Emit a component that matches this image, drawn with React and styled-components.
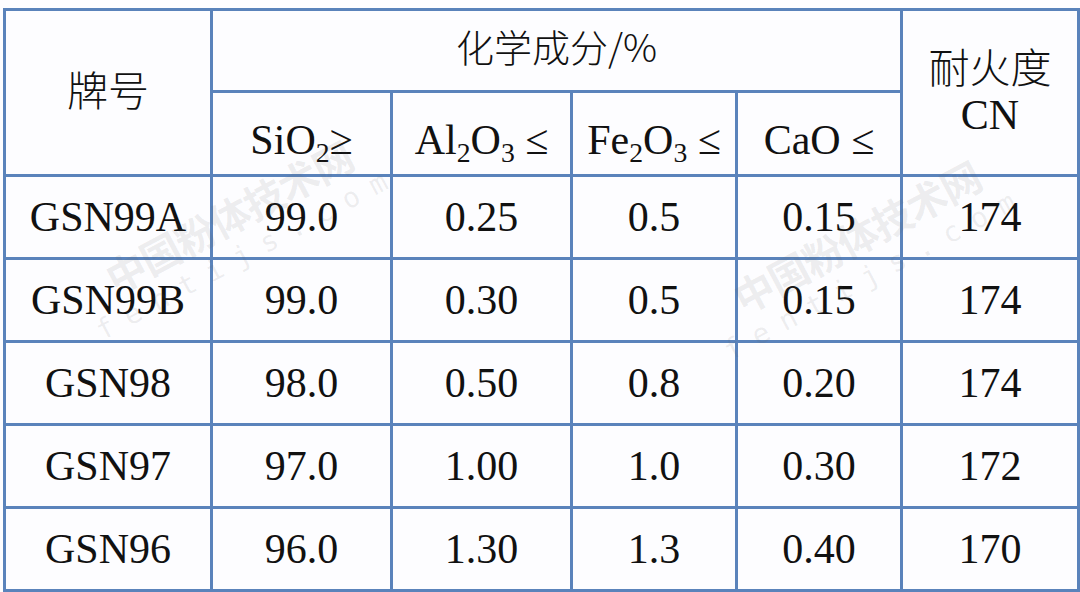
import styled, { createGlobalStyle } from "styled-components";

const rows = [
  { grade: "GSN99A", sio2: "99.0", al2o3: "0.25", fe2o3: "0.5", cao: "0.15", cn: "174" },
  { grade: "GSN99B", sio2: "99.0", al2o3: "0.30", fe2o3: "0.5", cao: "0.15", cn: "174" },
  { grade: "GSN98", sio2: "98.0", al2o3: "0.50", fe2o3: "0.8", cao: "0.20", cn: "174" },
  { grade: "GSN97", sio2: "97.0", al2o3: "1.00", fe2o3: "1.0", cao: "0.30", cn: "172" },
  { grade: "GSN96", sio2: "96.0", al2o3: "1.30", fe2o3: "1.3", cao: "0.40", cn: "170" },
];

const colWidths = [207, 180, 180, 165, 165, 177];

// faint site watermark, placed over the table
const marks = [
  { left: 62, top: 262 },
  { left: 690, top: 282 },
];

const App = () => {
  return (
    <Page>
      <GlobalStyle />
      <Frame>
        <Table>
          <colgroup>
            {colWidths.map((w, i) => (
              <col key={i} style={{ width: w }} />
            ))}
          </colgroup>
          <thead>
            <HeadRow $height={82}>
              <Cell rowSpan={2} $cjk>
                牌号
              </Cell>
              <Cell colSpan={4} $cjk $small>
                化学成分/%
              </Cell>
              <Cell rowSpan={2} $cjk>
                <Stack>
                  <span>耐火度</span>
                  <Latin>CN</Latin>
                </Stack>
              </Cell>
            </HeadRow>
            <HeadRow $height={84}>
              <Cell $lower>
                SiO<Sub>2</Sub>≥
              </Cell>
              <Cell $lower>
                Al<Sub>2</Sub>O<Sub>3</Sub> ≤
              </Cell>
              <Cell $lower>
                Fe<Sub>2</Sub>O<Sub>3</Sub> ≤
              </Cell>
              <Cell $lower>CaO ≤</Cell>
            </HeadRow>
          </thead>
          <tbody>
            {rows.map((row) => (
              <BodyRow key={row.grade}>
                <Cell>{row.grade}</Cell>
                <Cell>{row.sio2}</Cell>
                <Cell>{row.al2o3}</Cell>
                <Cell>{row.fe2o3}</Cell>
                <Cell>{row.cao}</Cell>
                <Cell>{row.cn}</Cell>
              </BodyRow>
            ))}
          </tbody>
        </Table>

        {marks.map((m, i) => (
          <Watermark key={i} style={{ left: m.left, top: m.top }}>
            <MarkTitle>中国粉体技术网</MarkTitle>
            <MarkUrl>fentijs.com</MarkUrl>
          </Watermark>
        ))}
      </Frame>
    </Page>
  );
};

const GlobalStyle = createGlobalStyle`
  html, body {
    margin: 0;
    padding: 0;
    background: #ffffff;
  }
`;

const Page = styled.div`
  width: 1080px;
  height: 592px;
  padding: 8px 3px 0 3px;
  box-sizing: border-box;
  background: #fdfdff;
  overflow: hidden;
`;

const Frame = styled.div`
  position: relative;
  width: 1074px;
`;

const Table = styled.table`
  width: 1074px;
  table-layout: fixed;
  border-collapse: collapse;
  border: 3px solid #5a83bb;
  font-family: "Liberation Serif", "Noto Sans CJK SC", serif;
  color: #111111;
`;

const HeadRow = styled.tr`
  height: ${({ $height }) => $height}px;
`;

const BodyRow = styled.tr`
  height: 83px;
`;

const Cell = styled.td`
  border: 3px solid #5a83bb;
  padding: ${({ $cjk, $lower }) => ($cjk ? "0 0 9px" : $lower ? "12px 0 0" : "0")};
  text-align: center;
  vertical-align: middle;
  font-size: ${({ $cjk, $small }) => ($small ? "38px" : $cjk ? "41px" : "42px")};
  font-family: ${({ $cjk }) =>
    $cjk
      ? '"Noto Sans CJK SC", "Liberation Serif", sans-serif'
      : '"Liberation Serif", "Noto Sans CJK SC", serif'};
  font-weight: ${({ $cjk }) => ($cjk ? 300 : 400)};
  line-height: 1;
  white-space: nowrap;
`;

const Stack = styled.div`
  display: flex;
  flex-direction: column;
  align-items: center;
  gap: 8px;
  margin-top: 4px;
`;

const Latin = styled.span`
  font-family: "Liberation Serif", serif;
  font-size: 42px;
  font-weight: 400;
`;

const Sub = styled.sub`
  font-size: 0.66em;
  vertical-align: -0.28em;
  line-height: 0;
`;

const Watermark = styled.div`
  position: absolute;
  transform: rotate(-28deg);
  transform-origin: left top;
  pointer-events: none;
  display: flex;
  flex-direction: column;
  align-items: center;
  color: rgba(90, 90, 90, 0.1);
`;

const MarkTitle = styled.span`
  font-family: "Noto Sans CJK SC", sans-serif;
  font-weight: 700;
  font-size: 40px;
  letter-spacing: -1px;
  white-space: nowrap;
`;

const MarkUrl = styled.span`
  font-family: "DejaVu Sans Mono", monospace;
  font-size: 28px;
  letter-spacing: 14px;
  margin-top: -4px;
  white-space: nowrap;
`;

export default App;
